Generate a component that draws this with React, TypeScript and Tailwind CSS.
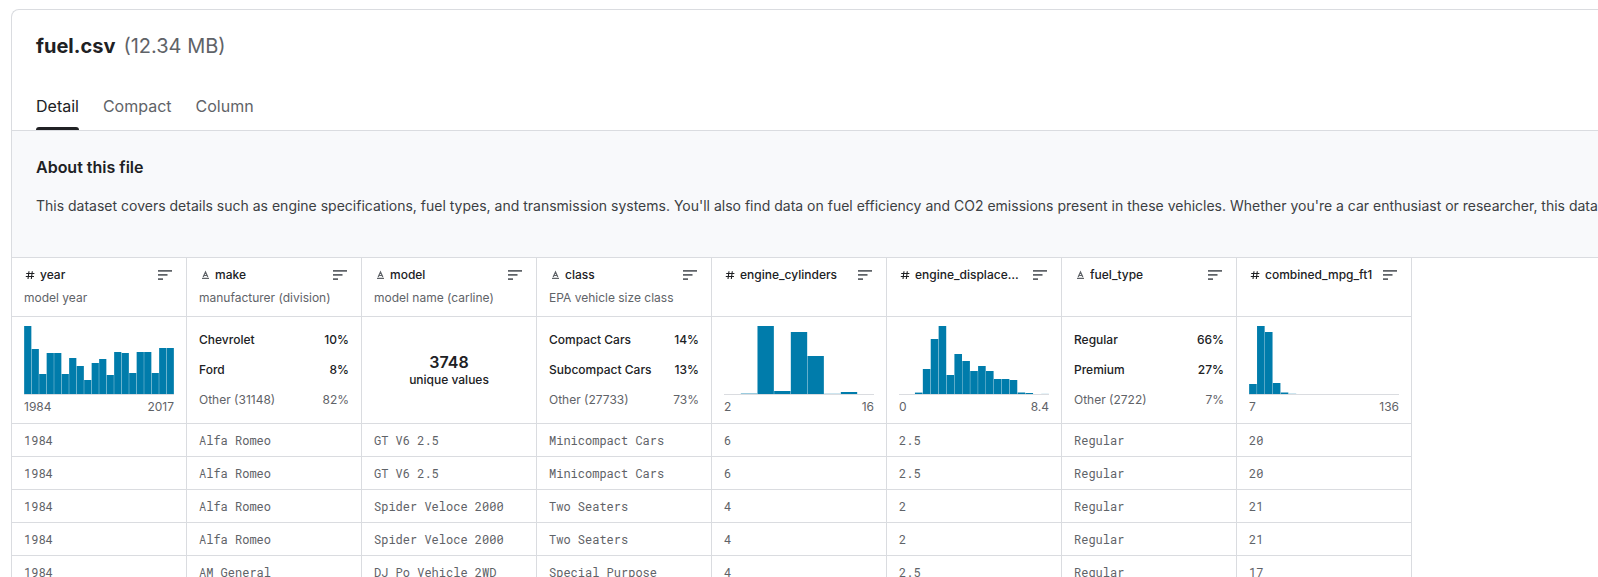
type Kind = "number" | "text";

type Summary =
  | { type: "histogram"; min: string; max: string; bars: number[] }
  | { type: "shares"; items: [string, string][] }
  | { type: "unique"; count: string };

interface Column {
  name: string;
  kind: Kind;
  description: string;
  summary: Summary;
}

const columns: Column[] = [
  {
    name: "year",
    kind: "number",
    description: "model year",
    summary: {
      type: "histogram",
      min: "1984",
      max: "2017",
      bars: [68, 45, 20, 41, 41, 20, 36, 28, 14, 31, 35, 19, 42, 41, 21, 42, 42, 21, 46, 46],
    },
  },
  {
    name: "make",
    kind: "text",
    description: "manufacturer (division)",
    summary: { type: "shares", items: [["Chevrolet", "10%"], ["Ford", "8%"], ["Other (31148)", "82%"]] },
  },
  {
    name: "model",
    kind: "text",
    description: "model name (carline)",
    summary: { type: "unique", count: "3748" },
  },
  {
    name: "class",
    kind: "text",
    description: "EPA vehicle size class",
    summary: {
      type: "shares",
      items: [["Compact Cars", "14%"], ["Subcompact Cars", "13%"], ["Other (27733)", "73%"]],
    },
  },
  {
    name: "engine_cylinders",
    kind: "number",
    description: "",
    summary: { type: "histogram", min: "2", max: "16", bars: [0, 0.4, 68, 3, 62, 38, 0.2, 2, 0] },
  },
  {
    name: "engine_displacement",
    kind: "number",
    description: "",
    summary: {
      type: "histogram",
      min: "0",
      max: "8.4",
      bars: [0, 0, 1.4, 25, 55, 68, 19, 40, 33, 23, 28, 23, 15, 15, 14, 1.5, 1, 0, 0.1],
    },
  },
  {
    name: "fuel_type",
    kind: "text",
    description: "",
    summary: { type: "shares", items: [["Regular", "66%"], ["Premium", "27%"], ["Other (2722)", "7%"]] },
  },
  {
    name: "combined_mpg_ft1",
    kind: "number",
    description: "",
    summary: {
      type: "histogram",
      min: "7",
      max: "136",
      bars: [10, 68, 62, 11, 1.5, 0.2, 0, 0, 0, 0, 0, 0, 0, 0, 0, 0, 0, 0, 0],
    },
  },
];

const rows: string[][] = [
  ["1984", "Alfa Romeo", "GT V6 2.5", "Minicompact Cars", "6", "2.5", "Regular", "20"],
  ["1984", "Alfa Romeo", "GT V6 2.5", "Minicompact Cars", "6", "2.5", "Regular", "20"],
  ["1984", "Alfa Romeo", "Spider Veloce 2000", "Two Seaters", "4", "2", "Regular", "21"],
  ["1984", "Alfa Romeo", "Spider Veloce 2000", "Two Seaters", "4", "2", "Regular", "21"],
  ["1984", "AM General", "DJ Po Vehicle 2WD", "Special Purpose", "4", "2.5", "Regular", "17"],
];

function KindIcon({ kind }: { kind: Kind }) {
  return kind === "number" ? (
    <svg viewBox="0 0 12 12" className="size-3 shrink-0" fill="none" stroke="#202124" strokeWidth="1.1" aria-hidden="true">
      <path d="M2.2 4.5H10.4M1.8 7.5H10M5 2.2 4 10M8.3 2.2 7.3 10" />
    </svg>
  ) : (
    <svg viewBox="0 0 12 12" className="size-3 shrink-0" fill="none" stroke="#5f6368" strokeWidth="1.2" aria-hidden="true">
      <path d="M4.2 8 6.5 3 8.8 8M4.8 6.5h3.4M3 9.4h7" />
    </svg>
  );
}

function SortIcon() {
  return (
    <svg viewBox="0 0 14 10" className="block h-[10px] w-[14px]" fill="#5f6368" aria-hidden="true">
      <path d="M0 0h14v1.7H0zM0 4.1h9.5v1.7H0zM0 8.3h5V10H0z" />
    </svg>
  );
}

function Histogram({ min, max, bars }: { min: string; max: string; bars: number[] }) {
  const step = 150 / bars.length;
  return (
    <div className="pt-[9px] text-xs text-[#5f6368]">
      <svg viewBox="0 0 150 69" className="block h-[69px] w-full" preserveAspectRatio="none" aria-hidden="true">
        {bars.map((height, i) => (
          <rect key={i} x={i * step + 0.15} y={68 - height} width={step - 0.3} height={height} fill="#007cab" />
        ))}
        <rect x="0" y="68" width="150" height="1" fill="#dadce0" />
      </svg>
      <div className="mt-1 flex justify-between leading-4">
        <span>{min}</span>
        <span>{max}</span>
      </div>
    </div>
  );
}

function SummaryCell({ summary }: { summary: Summary }) {
  if (summary.type === "histogram") return <Histogram {...summary} />;
  if (summary.type === "unique") {
    return (
      <div className="flex h-full flex-col items-center justify-center font-medium text-[#202124]">
        <span className="text-base leading-5 font-semibold">{summary.count}</span>
        <span className="text-xs leading-4">unique values</span>
      </div>
    );
  }
  return (
    <ul className="pt-2 text-xs leading-[30px] font-medium text-[#202124]">
      {summary.items.map(([label, share]) => (
        <li key={label} className="flex justify-between last:font-normal last:text-[#5f6368]">
          <span>{label}</span>
          <span>{share}</span>
        </li>
      ))}
    </ul>
  );
}

export default function App() {
  return (
    <main className="h-screen overflow-hidden bg-white pt-[9px] pl-[11px] font-['Inter',sans-serif]">
      <section className="h-full overflow-hidden rounded-tl-lg border-t border-l border-[#dadce0]">
        <h1 className="flex gap-2 px-6 pt-6 text-xl leading-6 font-bold text-[#202124]">
          fuel.csv <span className="font-normal text-[#5f6368]">(12.34 MB)</span>
        </h1>
        <nav className="mt-6 flex gap-6 border-b border-[#dadce0] px-6 text-base" aria-label="File view">
          {["Detail", "Compact", "Column"].map((tab, i) => (
            <button
              key={tab}
              type="button"
              aria-current={i === 0 ? "page" : undefined}
              className="flex h-12 flex-col items-center justify-between pt-3 text-[#5f6368] aria-[current=page]:text-[#202124]"
            >
              <span className="leading-6">{tab}</span>
              {i === 0 && <span className="h-[3px] w-full rounded-t-sm bg-[#202124]" />}
            </button>
          ))}
        </nav>
        <div className="border-b border-[#dadce0] bg-[#f8f9fb] px-6 pt-6 pb-10">
          <h2 className="text-base leading-6 font-semibold text-[#202124]">About this file</h2>
          <p className="mt-4 text-sm leading-[22px] whitespace-nowrap text-[#3c4043]">
            This dataset covers details such as engine specifications, fuel types, and transmission systems. You'll also
            find data on fuel efficiency and CO2 emissions present in these vehicles. Whether you're a car enthusiast or
            researcher, this data
          </p>
        </div>
        <table className="w-[1400px] table-fixed border-separate border-spacing-0">
          <thead>
            <tr>
              {columns.map((column) => (
                <th
                  key={column.name}
                  scope="col"
                  className="h-[59px] border-r border-b border-[#dadce0] px-3 pt-2 text-left align-top text-xs font-normal"
                >
                  <div className="flex items-center leading-[18px]">
                    <KindIcon kind={column.kind} />
                    <span className="ml-1 min-w-0 flex-1 truncate font-medium text-[#202124]">{column.name}</span>
                    <button type="button" aria-label={`Sort by ${column.name}`} className="mr-0.5 ml-1.5 shrink-0">
                      <SortIcon />
                    </button>
                  </div>
                  <p className="mt-1 truncate leading-5 text-[#5f6368]">{column.description}</p>
                </th>
              ))}
            </tr>
          </thead>
          <tbody>
            <tr>
              {columns.map((column) => (
                <td key={column.name} className="h-[107px] border-r border-b border-[#dadce0] px-3 align-top">
                  <div className="h-[106px]">
                    <SummaryCell summary={column.summary} />
                  </div>
                </td>
              ))}
            </tr>
            {rows.map((row, r) => (
              <tr key={r}>
                {row.map((value, c) => (
                  <td
                    key={c}
                    className="h-[33px] truncate border-r border-b border-[#dadce0] px-3 font-['Roboto_Mono','Liberation_Mono',monospace] text-xs text-[#5f6368]"
                  >
                    {value}
                  </td>
                ))}
              </tr>
            ))}
          </tbody>
        </table>
      </section>
    </main>
  );
}
